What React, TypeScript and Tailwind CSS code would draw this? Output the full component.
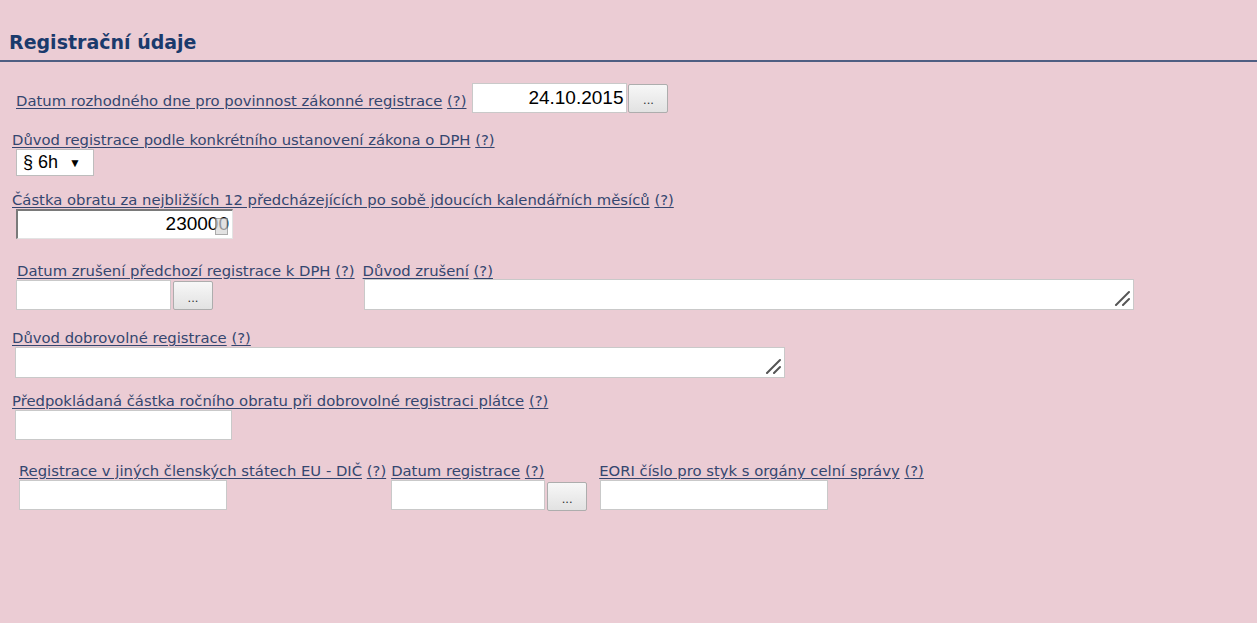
import React from "react";

const font = "font-['DejaVu_Sans','Liberation_Sans',sans-serif]";

const Label = ({ text, className = "" }: { text: string; className?: string }) => (
  <div className={`text-[14.8px] leading-[18px] text-[#34466f] whitespace-nowrap ${className}`}>
    <a href="#" className="underline decoration-[#34466f] underline-offset-2">{text}</a>{" "}
    <a href="#" className="underline underline-offset-2">(?)</a>
  </div>
);

const Field = ({ w, value = "", right = false, inset = false }: { w: string; value?: string; right?: boolean; inset?: boolean }) => (
  <div
    className={`${w} h-[30px] bg-white flex items-center ${right ? "justify-end pr-[3px]" : ""} font-['Liberation_Sans',sans-serif] text-[19px] text-black ${
      inset
        ? "border-l-2 border-t-2 border-r border-b border-l-[#7a7a7a] border-t-[#7a7a7a] border-r-[#e3e3e3] border-b-[#e3e3e3]"
        : "border border-[#c9c9c9]"
    }`}
  >
    {value}
  </div>
);

const DotsButton = () => (
  <div className="w-[40px] h-[29px] rounded-[2px] border border-[#adadad] bg-gradient-to-b from-[#f7f7f7] to-[#e2e2e2] flex items-center justify-center text-[13px] text-[#333] font-['Liberation_Sans',sans-serif] pt-[4px]">
    ...
  </div>
);

const Area = ({ w }: { w: string }) => (
  <div className={`${w} h-[31px] bg-white border border-[#c9c9c9] relative`}>
    <svg className="absolute right-[3px] bottom-[3px]" width="16" height="16" viewBox="0 0 16 16">
      <line x1="2" y1="15" x2="15" y2="2" stroke="#555" strokeWidth="2" strokeLinecap="round" />
      <line x1="9" y1="15" x2="15" y2="9" stroke="#555" strokeWidth="2" strokeLinecap="round" />
    </svg>
  </div>
);

export default function App() {
  return (
    <div className={`min-h-[623px] w-full bg-[#ebccd4] ${font}`}>
      <div className="pt-[31px] pl-[9px] pb-[7px] text-[19px] leading-[22px] font-bold text-[#1a3a6c]">
        Registrační údaje
      </div>
      <div className="h-[2px] bg-[#4e5e82]" />

      {/* rozhodný den */}
      <div className="flex items-end mt-[21px] pl-[16px]">
        <Label text="Datum rozhodného dne pro povinnost zákonné registrace" className="mb-[3px]" />
        <div className="ml-[6px] flex items-center">
          <Field w="w-[155px]" value="24.10.2015" right />
          <div className="ml-[1px]"><DotsButton /></div>
        </div>
      </div>

      {/* důvod registrace */}
      <Label text="Důvod registrace podle konkrétního ustanovení zákona o DPH" className="mt-[18px] pl-[12px]" />
      <div className="pl-[16px]">
        <div className="w-[78px] h-[27px] bg-white border border-[#bdbdbd] flex items-center pl-[6px] font-['Liberation_Sans',sans-serif] text-[18px] text-black">
          § 6h
          <span className="ml-[11px] text-[12px]">▼</span>
        </div>
      </div>

      {/* částka obratu */}
      <Label text="Částka obratu za nejbližších 12 předcházejících po sobě jdoucích kalendářních měsíců" className="mt-[15px] pl-[12px]" />
      <div className="pl-[16px]">
        <div className="relative w-[217px]">
          <Field w="w-[217px]" value="230000" right inset />
          <div className="absolute right-[5px] top-[9px] w-[13px] h-[17px] border border-[#888] bg-[#d6d6d6] opacity-70" />
        </div>
      </div>

      {/* zrušení předchozí registrace */}
      <div className="mt-[23px] flex">
        <div className="pl-[17px] flex flex-col">
          <Label text="Datum zrušení předchozí registrace k DPH" />
          <div className="flex items-start -ml-[1px]">
            <Field w="w-[155px]" />
            <div className="ml-[2px] mt-[1px]"><DotsButton /></div>
          </div>
        </div>
        <div className="ml-[8px] flex flex-col">
          <Label text="Důvod zrušení" />
          <div className="-mt-[1px] ml-[1px]"><Area w="w-[770px]" /></div>
        </div>
      </div>

      {/* dobrovolná registrace */}
      <Label text="Důvod dobrovolné registrace" className="mt-[19px] pl-[12px]" />
      <div className="pl-[15px]">
        <Area w="w-[770px]" />
      </div>

      <Label text="Předpokládaná částka ročního obratu při dobrovolné registraci plátce" className="mt-[14px] pl-[12px]" />
      <div className="pl-[15px]">
        <Field w="w-[217px]" />
      </div>

      {/* jiné členské státy */}
      <div className="mt-[22px] flex">
        <div className="pl-[19px] flex flex-col">
          <Label text="Registrace v jiných členských státech EU - DIČ" />
          <Field w="w-[208px]" />
        </div>
        <div className="ml-[5px] flex flex-col">
          <Label text="Datum registrace" />
          <div className="flex items-start">
            <Field w="w-[154px]" />
            <div className="ml-[2px] mt-[2px]"><DotsButton /></div>
          </div>
        </div>
        <div className="ml-[12px] flex flex-col">
          <Label text="EORI číslo pro styk s orgány celní správy" />
          <div className="ml-[1px]"><Field w="w-[228px]" /></div>
        </div>
      </div>
    </div>
  );
}
